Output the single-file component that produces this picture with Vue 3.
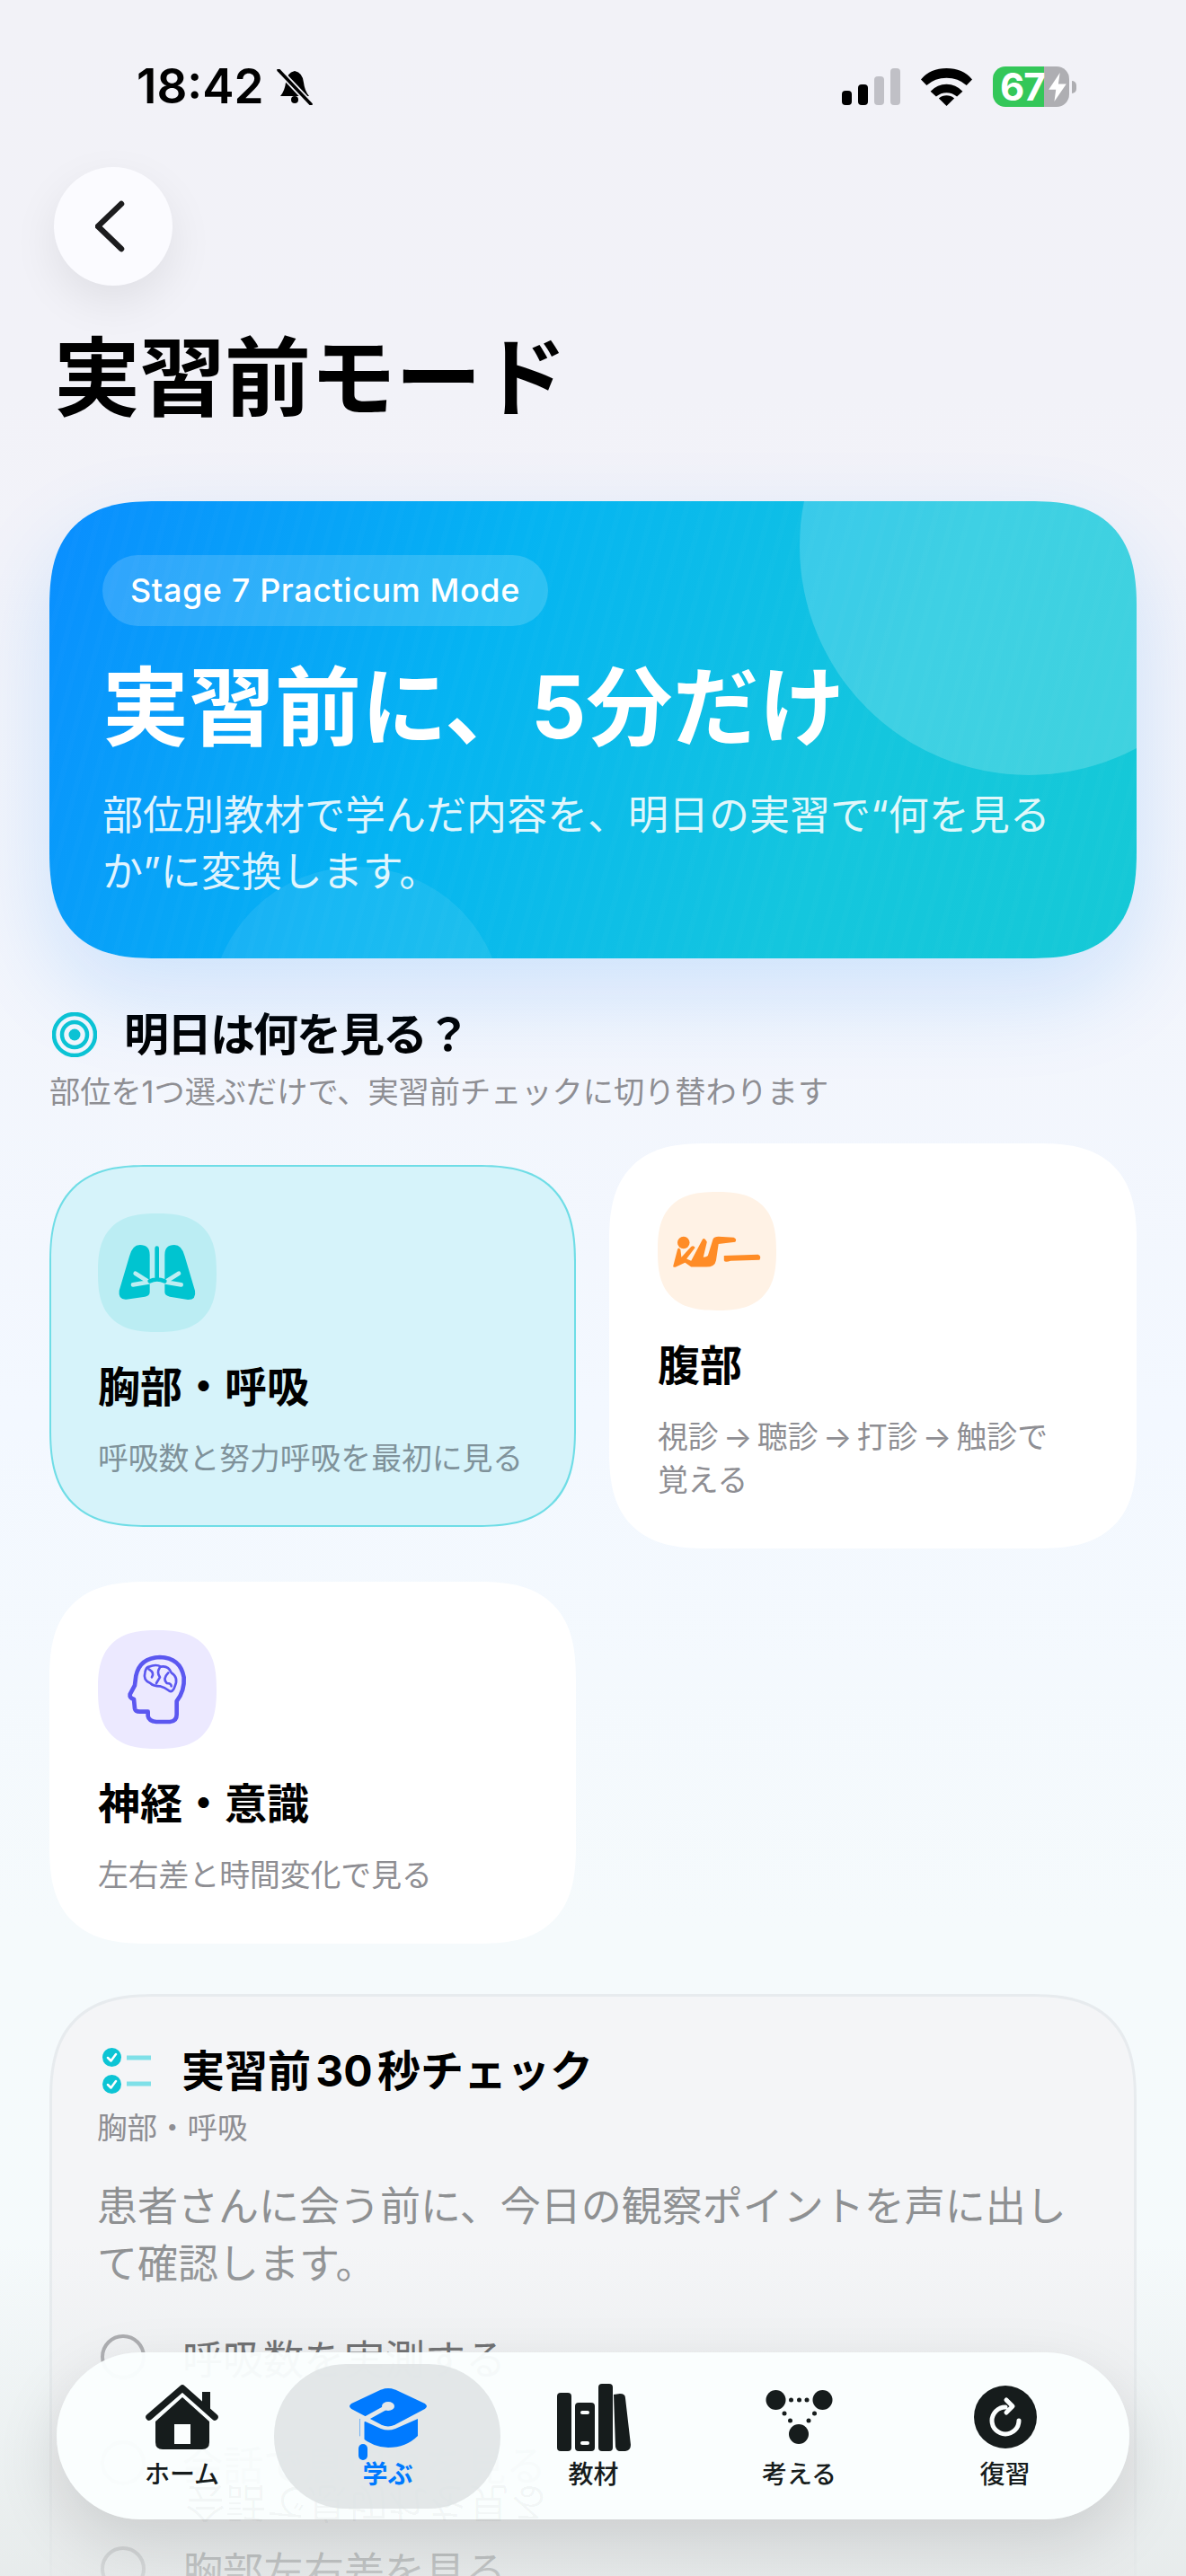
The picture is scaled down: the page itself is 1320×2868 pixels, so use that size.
<script setup>
const checks = ['呼吸数を実測する', '会話で息切れを見る', '胸部左右差を見る']
</script>

<template>
  <div class="screen">
    <header class="status">
      <div class="status-left">
        <span class="time">18:42</span>
        <svg class="bell" viewBox="0 0 43 40">
          <path d="M21 2Q12 4 11 15Q10 24 5 30L37 30Q32 24 31 15Q30 4 21 2Z" fill="#000" />
          <circle cx="21" cy="34" r="4" fill="#000" />
          <path d="M4 2L38 38" stroke="#f2f2f7" stroke-width="7" />
          <path d="M3 1L39 39" stroke="#000" stroke-width="3.5" stroke-linecap="round" />
        </svg>
      </div>
      <div class="status-right">
        <div class="signal">
          <i class="on b1"></i><i class="on b2"></i><i class="b3"></i><i class="b4"></i>
        </div>
        <svg class="wifi" viewBox="375 75 172 126">
          <path d="M461 75Q515 75 547 112L528 132Q500 107 461 107Q422 107 394 132L375 112Q407 75 461 75Z" />
          <path d="M461 128Q492 128 515 152L496 170Q480 157 461 157Q442 157 426 170L407 152Q430 128 461 128Z" />
          <path d="M461 166Q476 166 487 176L461 201L435 176Q446 166 461 166Z" />
        </svg>
        <div class="battery">
          <div class="battery-body">
            <span>67</span>
            <svg viewBox="0 0 22 36"><path d="M14 0L0 21L9 21L7 36L22 14L12 14Z" fill="#fff" /></svg>
          </div>
          <i class="battery-cap"></i>
        </div>
      </div>
    </header>

    <button type="button" class="back">
      <svg viewBox="0 0 40 60"><path d="M29 5L3 30L29 55" fill="none" stroke="#1c1c1e" stroke-width="6.500" stroke-linecap="round" stroke-linejoin="round" /></svg>
    </button>

    <h1 class="page-title">実習前モード</h1>

    <section class="hero">
      <span class="hero-tag">Stage 7 Practicum Mode</span>
      <h2>実習前に、5分だけ</h2>
      <p>部位別教材で学んだ内容を、明日の実習で“何を見るか”に変換します。</p>
    </section>

    <section class="pick">
      <div class="pick-head">
        <svg viewBox="0 0 50 50">
          <circle cx="25" cy="25" r="23" fill="none" stroke="#0cc4d4" stroke-width="4.5" />
          <circle cx="25" cy="25" r="14" fill="none" stroke="#0cc4d4" stroke-width="4.5" />
          <circle cx="25" cy="25" r="6.5" fill="#0cc4d4" />
        </svg>
        <h3>明日は何を見る？</h3>
      </div>
      <p class="pick-sub">部位を1つ選ぶだけで、実習前チェックに切り替わります</p>

      <div class="cards">
        <article class="card selected">
          <div class="card-icon teal">
            <svg viewBox="55 67 396 396">
              <path d="M160 210Q170 172 195 172Q228 172 228 205L228 330Q228 342 212 345L150 354Q122 356 126 325Z" fill="#00c4d0" />
              <path d="M345 210Q335 172 310 172Q278 172 278 205L278 330Q278 340 295 345L355 355Q384 356 379 325Z" fill="#00c4d0" />
              <g fill="none" stroke="#bdedf2" stroke-width="14" stroke-linecap="round">
                <path d="M180 267L225 296M172 305L225 296M325 267L280 296M333 305L280 296" />
              </g>
              <path d="M252 183L252 285M228 293Q252 282 278 293" fill="none" stroke="#00c4d0" stroke-width="14" stroke-linecap="round" />
            </svg>
          </div>
          <h4>胸部・呼吸</h4>
          <p>呼吸数と努力呼吸を最初に見る</p>
        </article>

        <article class="card">
          <div class="card-icon orange">
            <svg viewBox="40 25 390 390" fill="#ff8c26">
              <circle cx="125" cy="192" r="20" />
              <path d="M92 265L105 215Q108 205 115 215L118 240L150 205Q158 200 163 208L135 245L150 252L188 180Q195 175 202 190L190 240Q200 240 205 235L222 180Q226 172 240 172L290 175Q302 180 295 190L240 196L232 250Q228 272 200 272L150 272L130 258L100 272Q88 275 92 265Z" />
              <path d="M258 235L370 231Q382 236 375 249L280 252Q260 258 258 250Z" />
            </svg>
          </div>
          <h4>腹部</h4>
          <p class="steps">視診 → 聴診 → 打診 → 触診で<br />覚える</p>
        </article>

        <article class="card">
          <div class="card-icon violet">
            <svg viewBox="55 48 396 396" fill="none" stroke="#5b57f0" stroke-linecap="round" stroke-linejoin="round">
              <path stroke-width="14" d="M222 320L222 335Q225 352 250 354L295 354Q318 352 318 330L318 285Q345 250 342 205Q330 140 262 138Q195 140 182 200L178 232L162 262Q160 275 175 278L178 310Q180 320 195 320Z" />
              <path stroke-width="8" d="M225 170Q250 160 265 170Q290 165 300 190Q325 205 312 235Q305 258 292 250Q280 240 262 235Q240 235 230 225Q205 215 212 190Q215 172 225 170ZM225 178Q245 190 235 205M262 172Q250 190 262 205L250 225M290 190Q270 210 285 225Q300 225 300 235" />
            </svg>
          </div>
          <h4>神経・意識</h4>
          <p>左右差と時間変化で見る</p>
        </article>
      </div>
    </section>

    <section class="check-card">
      <div class="check-head">
        <svg viewBox="0 0 54 51">
          <circle cx="10.5" cy="10.5" r="10.5" fill="#0cc4d4" />
          <circle cx="10.5" cy="40.5" r="10.5" fill="#0cc4d4" />
          <path d="M6 11L9.5 14.500L15 7M6 41L9.5 44.500L15 37" fill="none" stroke="#fff" stroke-width="2.500" stroke-linecap="round" stroke-linejoin="round" />
          <path d="M27 11L54 11M27 40L54 40" stroke="#7fe0e8" stroke-width="5" />
        </svg>
        <h3>実習前 30 秒チェック</h3>
      </div>
      <p class="check-part">胸部・呼吸</p>
      <p class="check-text">患者さんに会う前に、今日の観察ポイントを声に出して確認します。</p>
      <ul>
        <li v-for="item in checks" :key="item"><i></i><span>{{ item }}</span></li>
      </ul>
    </section>

    <div class="bottom-fade"></div>

    <nav class="tabbar">
      <span class="ghost" aria-hidden="true">会話で息切れを見る</span>
      <a class="tab">
        <div class="tab-icon">
          <svg width="81" height="72" viewBox="0 0 81 72">
            <path d="M41 14L71 41L71 64Q71 72 63 72L19 72Q11 72 11 64L11 41Z" fill="#161c1c" />
            <path d="M63 8H72V28H63Z" fill="#161c1c" />
            <path d="M4 36L41 4L77 36" fill="none" stroke="#161c1c" stroke-width="7.500" stroke-linecap="round" stroke-linejoin="round" />
            <path d="M32 44H50V66H32Z" fill="#fbfefe" />
          </svg>
        </div>
        <span>ホーム</span>
      </a>
      <a class="tab active">
        <div class="tab-icon">
          <svg class="cap" width="92" height="82" viewBox="0 0 92 82">
            <path d="M14 36L14 55Q30 68 46 68Q66 68 79 55L79 36L54 47Q46 50 38 47Z" fill="#007aff" />
            <path d="M38 2Q46 -1 54 2L88 18Q93 22 88 26L54 44Q46 48 38 44L4 26Q-1 22 4 18Z" fill="#007aff" stroke="#e4e8e9" stroke-width="3" />
            <path d="M46 22L17 38L17 62" fill="none" stroke="#e4e8e9" stroke-width="5" />
            <ellipse cx="46" cy="22" rx="7" ry="5" fill="#e4e8e9" />
            <rect x="13" y="64" width="10" height="18" rx="5" fill="#007aff" />
          </svg>
        </div>
        <span>学ぶ</span>
      </a>
      <a class="tab">
        <div class="tab-icon">
          <svg width="82" height="75" viewBox="0 0 82 75" fill="#161c1c">
            <rect x="0" y="10" width="16" height="65" rx="4" />
            <rect x="20" y="21" width="22" height="54" rx="4" />
            <rect x="46" y="0" width="16" height="75" rx="4" />
            <path d="M63 12L70 11Q76 11 76 16L82 68Q82 74 76 75L70 75Q66 75 65 70Z" />
            <rect x="26" y="30" width="10" height="4" rx="2" fill="#fbfefe" />
            <rect x="26" y="64" width="10" height="4" rx="2" fill="#fbfefe" />
          </svg>
        </div>
        <span>教材</span>
      </a>
      <a class="tab">
        <div class="tab-icon">
          <svg width="75" height="60" viewBox="0 0 75 60" fill="#161c1c">
            <circle cx="11.500" cy="11" r="11" />
            <circle cx="63.500" cy="11" r="11" />
            <circle cx="37" cy="49" r="11" />
            <circle cx="28.500" cy="11" r="2.500" />
            <circle cx="37.500" cy="11" r="2.500" />
            <circle cx="46" cy="11" r="2.500" />
            <circle cx="21" cy="26" r="2.500" />
            <circle cx="27.500" cy="34" r="2.500" />
            <circle cx="54.500" cy="26" r="2.500" />
            <circle cx="48" cy="34" r="2.500" />
          </svg>
        </div>
        <span>考える</span>
      </a>
      <a class="tab">
        <div class="tab-icon">
          <svg width="70" height="70" viewBox="0 0 70 70">
            <circle cx="35" cy="35" r="35" fill="#161c1c" />
            <path d="M35 24A15 15 0 1 0 50 39M36 16L43 23L36 30" fill="none" stroke="#fbfefe" stroke-width="5" stroke-linecap="round" stroke-linejoin="round" />
          </svg>
        </div>
        <span>復習</span>
      </a>
    </nav>
  </div>
</template>

<style>
html, body { margin: 0; background: #f2f2f7; }
</style>

<style scoped>
.screen { position: relative; width: 1320px; height: 2868px; overflow: hidden; background: linear-gradient(180deg, #f2f2f7 0%, #f2f2f8 15%, #f3f8ff 55%, #f5fafc 75%, #f5fafb 100%); font-family: Inter, "Noto Sans CJK JP", sans-serif; color: #000; }
.status { display: flex; justify-content: space-between; align-items: center; height: 45px; padding: 74px 122px 0 152px; }
.status-left { display: flex; align-items: center; gap: 13px; }
.time { font-size: 53px; font-weight: 600; line-height: 45px; }
.bell { width: 43px; height: 40px; }
.status-right { display: flex; align-items: center; }
.signal { display: flex; align-items: flex-end; gap: 7px; height: 41px; margin-right: 23px; }
.signal i { display: block; width: 11px; border-radius: 4px; background: #c0c0c6; }
.signal i.on { background: #000; }
.signal .b1 { height: 16px; }
.signal .b2 { height: 23px; }
.signal .b3 { height: 32px; }
.signal .b4 { height: 41px; }
.wifi { width: 57px; height: 42px; margin-right: 23px; }
.battery { display: flex; align-items: center; gap: 3px; }
.battery-body { display: flex; align-items: center; width: 85px; height: 45px; padding-left: 8px; box-sizing: border-box; border-radius: 14px; background: linear-gradient(90deg, #34c759 0 67%, #aeaeb2 67% 100%); color: #fff; font-size: 42px; font-weight: 700; letter-spacing: -1px; }
.battery-body svg { width: 20px; height: 32px; margin-left: 4px; }
.battery-cap { display: block; width: 5px; height: 14px; border-radius: 0 5px 5px 0; background: #aeaeb2; }

.back { display: block; width: 132px; height: 132px; margin: 67px 0 0 60px; padding: 0; border: 0; border-radius: 50%; background: #fbfbff; box-shadow: 0 18px 50px rgba(0, 0, 0, 0.08); }
.back svg { display: block; width: 40px; height: 60px; margin: 0 auto; }

.page-title { margin: 52px 0 0 60px; font-size: 96px; line-height: 100px; font-weight: 700; letter-spacing: -1px; }

.hero { position: relative; overflow: hidden; box-sizing: border-box; width: 1210px; height: 509px; margin: 88px 0 0 55px; padding: 60px 59px 0; border-radius: 84px; color: #fff; background: repeating-linear-gradient(105deg, rgba(255, 255, 255, 0.012) 0 6px, transparent 6px 18px), linear-gradient(115deg, #0a8dff 0%, #05b4f2 38%, #14c6de 72%, #15c9d6 100%); box-shadow: 0 40px 100px rgba(10, 132, 255, 0.16); }
.hero::before { content: ""; position: absolute; left: 835px; top: -205px; width: 510px; height: 510px; border-radius: 50%; background: rgba(255, 255, 255, 0.18); }
.hero::after { content: ""; position: absolute; left: 179px; top: 407px; width: 326px; height: 326px; border-radius: 50%; background: rgba(255, 255, 255, 0.08); }
.hero > * { position: relative; z-index: 1; }
.hero-tag { display: inline-block; height: 79px; padding: 0 31px; border-radius: 40px; background: rgba(255, 255, 255, 0.16); font-size: 36px; line-height: 79px; font-weight: 500; letter-spacing: 0.6px; }
.hero h2 { margin: 30px 0 0; font-size: 96px; line-height: 120px; font-weight: 700; }
.hero p { margin: 29px 0 0; font-size: 45px; line-height: 63px; color: rgba(255, 255, 255, 0.88); }

.pick { margin-top: 60px; padding: 0 55px; }
.pick-head { display: flex; align-items: center; gap: 30px; padding-left: 3px; }
.pick-head svg { width: 50px; height: 50px; flex: none; }
.pick-head h3 { margin: 0; font-size: 50px; line-height: 50px; font-weight: 700; letter-spacing: -2px; }
.pick-sub { margin: 17px 0 0; font-size: 34.200px; line-height: 44px; color: #8e8e93; }
.cards { display: grid; grid-template-columns: 586px 587px; gap: 37px 37px; align-items: center; margin-top: 35px; }
.card { box-sizing: border-box; padding: 54px 53px 52px 54px; border-radius: 76px; background: #fff; }
.card.selected { padding: 52px 51px 50px 52px; border: 2px solid #6fdde6; background: #d6f3fa; }
.card-icon { width: 132px; height: 132px; border-radius: 50px; }
.card-icon svg { display: block; width: 132px; height: 132px; }
.card-icon.teal { background: #bbedf3; }
.card-icon.orange { background: #fff2e5; }
.card-icon.violet { background: #ece9ff; }
.card h4 { margin: 29px 0 0; font-size: 47px; line-height: 64px; font-weight: 700; }
.card p { margin: 24px 0 0; font-size: 33.800px; line-height: 48px; color: #8e8e93; }
.card p.steps { word-spacing: -4px; }
.card.selected p { color: #7f929a; }

.check-card { box-sizing: border-box; width: 1210px; height: 900px; margin: 56px 0 0 55px; padding: 57px 50px; border: 3px solid #e7ebee; border-radius: 84px; background: #f4f5f7; }
.check-head { display: flex; align-items: center; gap: 34px; padding-left: 6px; height: 51px; }
.check-head svg { width: 54px; height: 51px; flex: none; }
.check-head h3 { margin: 0; font-size: 48px; line-height: 51px; font-weight: 700; word-spacing: -6px; }
.check-part { margin: 16px 0 0; font-size: 33.500px; line-height: 44px; color: #8e8e93; }
.check-text { margin: 34px 0 0; font-size: 45px; line-height: 64px; color: #8e9092; }
.check-card ul { display: flex; flex-direction: column; gap: 68px; margin: 46px 0 0; padding: 0 0 0 4px; list-style: none; }
.check-card li { display: flex; align-items: center; gap: 41px; height: 50px; font-size: 45px; color: #48484a; }
.check-card li i { box-sizing: border-box; width: 50px; height: 50px; border: 4px solid #9a9a9e; border-radius: 50%; }

.bottom-fade { position: absolute; left: 0; right: 0; top: 2500px; bottom: 0; background: linear-gradient(180deg, rgba(228, 232, 232, 0) 0%, rgba(228, 232, 232, 0.35) 40%, rgba(228, 232, 232, 0.8) 100%); }

.tabbar { position: absolute; left: 63px; top: 2619px; box-sizing: border-box; display: grid; grid-template-columns: repeat(5, 229px); width: 1194px; height: 186px; padding: 0 25px; border-radius: 93px; background: rgba(250, 254, 254, 0.965); box-shadow: 0 26px 70px rgba(0, 0, 0, 0.13); }
.ghost { position: absolute; left: 143px; top: 148px; font-size: 45px; line-height: 38px; color: rgba(0, 0, 0, 0.035); transform: scaleY(-1); }
.tab { position: relative; display: flex; flex-direction: column; align-items: center; padding-top: 28px; font-size: 28px; font-weight: 500; color: #161c1c; }
.tab > * { position: relative; }
.tab.active { color: #007aff; font-weight: 700; }
.tab.active::before { content: ""; position: absolute; left: -12px; right: -11px; top: 13px; bottom: 12px; border-radius: 80px; background: rgba(222, 227, 228, 0.85); }
.tab-icon { display: flex; align-items: center; justify-content: center; height: 88px; }
.tab-icon svg { display: block; flex: none; }
.tab-icon .cap { margin-top: 14px; overflow: visible; }
.tab > span { margin-top: 2px; line-height: 36px; }

@supports (corner-shape: squircle) {
  .hero, .check-card { border-radius: 120px; corner-shape: superellipse(1.4); }
  .card { border-radius: 110px; corner-shape: superellipse(1.4); }
  .card-icon { border-radius: 68px; corner-shape: superellipse(1.4); }
}
</style>
